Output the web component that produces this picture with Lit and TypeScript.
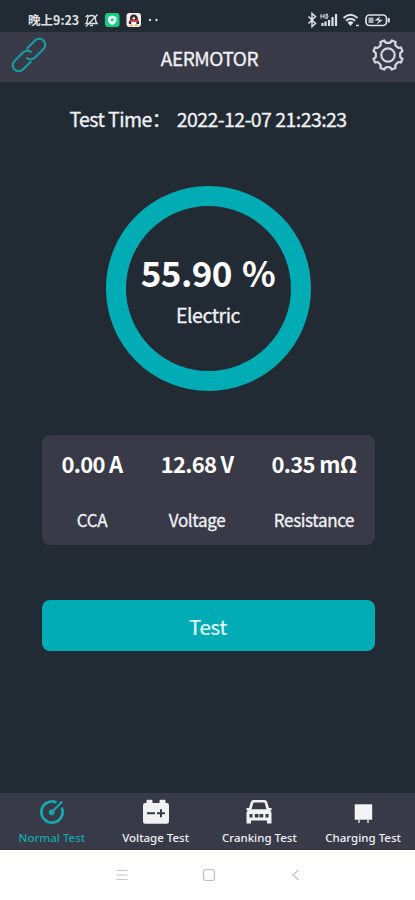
import { LitElement, html, svg, css } from "lit";
import { customElement } from "lit/decorators.js";

const gearPath = (() => {
  const n = 8;
  const pts: string[] = [];
  const at = (r: number, deg: number) => {
    const a = (deg * Math.PI) / 180;
    return `${(17 + r * Math.cos(a)).toFixed(2)} ${(17 + r * Math.sin(a)).toFixed(2)}`;
  };
  for (let i = 0; i < n; i++) {
    const c = (i * 360) / n + 22.5;
    pts.push(`${i ? "L" : "M"}${at(15, c - 8)}`, `L${at(15, c + 8)}`);
    pts.push(`Q${at(11.8, c + 10)} ${at(12.2, c + 22.5)}`, `Q${at(11.8, c + 35)} ${at(15, c + 37)}`);
  }
  return pts.join("") + "Z";
})();

const dial = svg`<g fill="none" stroke="#14a7ad" stroke-width="2.8">
  <path d="M18.5 4.4A10.6 10.6 0 1 0 23.6 9.5"/>
  <path d="M14 14L24.2 3.4" stroke-width="2.2"/></g>
  <circle cx="13.6" cy="14.3" r="2.9" fill="#14a7ad"/>`;
const battery = svg`<path fill="#f1f1f4" d="M4.5 5V3q0-1.2 1.2-1.2h3.6q1.2 0 1.2 1.2v2h7V3q0-1.2 1.2-1.2h3.6q1.2 0 1.2 1.2v2h1.3q2.2 0 2.2 2.2v16.3q0 2.2-2.2 2.2H3.2Q1 25.700 1 23.500V7.200Q1 5 3.200 5z"/>
  <path d="M5 15.300h8M15 15.300h8M19 11.300v8" stroke="#393a47" stroke-width="2"/>`;
const car = svg`<path fill="#f1f1f4" fill-rule="evenodd" d="M8.500 2h11q2 0 2.600 1.800L24 10h2.500v2.500H25q1.500 1 1.500 2.500v10.500h-4.500v-3h-16v3H1.500V15q0-1.500 1.500-2.500H1.500V10H4L5.900 3.800Q6.500 2 8.500 2zM8.500 4.600L6.500 11.300h15L19.500 4.600zM4.500 16v3.500h3v-3.500zM9.800 16v3.500h8.400v-3.500zM20.500 16v3.500h3v-3.500z"/>
  <path d="M14 15.500v4.500" stroke="#f1f1f4" stroke-width="1"/>`;
const plug = svg`<path fill="#f4f4f6" d="M5.700 6.300h17.500v15.400H5.700z"/>
  <path d="M10 21v4M19 21v4" stroke="#d8d9df" stroke-width="1.500"/>`;

const tabs = [
  { label: "Normal Test", icon: dial, on: true },
  { label: "Voltage Test", icon: battery, on: false },
  { label: "Cranking Test", icon: car, on: false },
  { label: "Charging Test", icon: plug, on: false },
];

const readings = [
  { value: "0.00 A", label: "CCA" },
  { value: "12.68 V", label: "Voltage" },
  { value: "0.35 mΩ", label: "Resistance" },
];

@customElement("app-root")
export class AppRoot extends LitElement {
  static styles = css`
    :host {
      display: flex; flex-direction: column; width: 415px; height: 900px; overflow: hidden;
      background: #222b33; color: #f0f1f5; line-height: 1;
      font-family: "Noto Sans CJK SC", "Noto Sans", sans-serif;
    }
    * { box-sizing: border-box; }
    svg { display: block; flex: none; }
    .status { height: 32px; padding: 8px 24px 0 28px; display: flex; justify-content: space-between; align-items: center; color: #dde0e3; }
    .side { display: flex; align-items: center; }
    .clock { font-size: 12.5px; font-weight: 700; white-space: nowrap; width: 52px; }
    .header { height: 50px; background: #393a47; display: flex; align-items: center; justify-content: space-between; padding: 0 10px 4px 10px; }
    .title { font-size: 19px; letter-spacing: -0.45px; white-space: nowrap; margin-top: 5px; -webkit-text-stroke: 0.3px; }
    .main { flex: 1; display: flex; flex-direction: column; align-items: center; padding-left: 1px; }
    .time { display: flex; gap: 6px; margin-top: 26px; height: 22px; align-items: center; font-size: 19.5px; letter-spacing: -0.55px; white-space: nowrap; -webkit-text-stroke: 0.3px; }
    .stamp { letter-spacing: -0.55px; }
    .ring { margin-top: 56px; width: 205px; height: 205px; border: 20px solid #02acb4; border-radius: 50%; display: flex; flex-direction: column; align-items: center; padding-top: 47px; }
    .percent { font-size: 35px; font-weight: 700; line-height: 38px; letter-spacing: -0.6px; word-spacing: 3px; white-space: nowrap; color: #fff; }
    .electric { font-size: 19.5px; letter-spacing: -0.45px; line-height: 24px; margin-top: 12px; -webkit-text-stroke: 0.3px; }
    .card { margin-top: 44px; width: 333px; height: 110px; border-radius: 8px; background: #393a47; padding: 0 18px 0 20px; display: flex; justify-content: space-between; }
    .reading { display: flex; flex-direction: column; align-items: center; white-space: nowrap; }
    .value { font-size: 22px; font-weight: 700; line-height: 26px; letter-spacing: -0.7px; margin-top: 15px; color: #fff; }
    .label { font-size: 17px; line-height: 22px; letter-spacing: -0.35px; margin-top: 33px; -webkit-text-stroke: 0.3px; }
    .button { margin-top: 55px; width: 333px; height: 51px; border: 0; border-radius: 8px; background: #02acb4; color: #e6fbfc; font: 400 20.5px/52px "Noto Sans CJK SC", sans-serif; letter-spacing: -0.3px; padding: 0; -webkit-text-stroke: 0.2px; }
    .tabs { height: 57px; background: #393a47; display: grid; grid-template-columns: repeat(4, 1fr); border-bottom: 1px solid #30313e; }
    .tab { display: flex; flex-direction: column; align-items: center; padding-top: 5px; font: 500 11.5px/14px "Noto Sans", sans-serif; white-space: nowrap; }
    .tab span { margin-top: 5px; }
    .on { color: #14a7ad; }
    .nav { height: 50px; background: #fff; display: flex; justify-content: center; align-items: center; gap: 73px; padding-left: 2px; }
  `;

  render() {
    return html`
      <div class="status">
        <div class="side">
          <span class="clock">晚上9:23</span>
          <svg width="82" height="18" viewBox="0 0 82 18" fill="none">
            <path d="M6 12.500Q7.500 11 7.500 8Q7.500 4.500 11.500 4.500Q15 4.500 15.500 8Q15.500 11 17 12.500ZM10 14.500h3M17.500 3.500L6 15.500M5.500 6L8 4" stroke="#dde0e3" stroke-width="1.300"/>
            <rect x="25" y="2" width="14.500" height="14" rx="3" fill="#14cc86"/>
            <path d="M32.200 4.500L36.500 6v3q0 3-4.300 5Q28 12 28 9V6z" fill="#eafff7"/>
            <circle cx="32.200" cy="8.700" r="1.500" fill="#14cc86"/>
            <rect x="46.500" y="2" width="14.500" height="14" rx="3" fill="#f4eeee"/>
            <path d="M49 13Q48 11 50 9Q49.500 3.500 53.700 3.500T58 9Q60 11 59 13Z" fill="#35272b"/>
            <ellipse cx="53.800" cy="12" rx="2.700" ry="2.500" fill="#fff"/>
            <path d="M50 9.300q4 1.600 8 0" stroke="#df4139" stroke-width="1.800"/>
            <path d="M50 14.300h2.500M55 14.300h2.500" stroke="#ef9c32" stroke-width="1.400"/>
            <circle cx="53.800" cy="7.200" r="1.300" fill="#f4eeee"/>
            <circle cx="70" cy="9" r="1.200" fill="#dde0e3"/><circle cx="76.500" cy="9" r="1.200" fill="#dde0e3"/>
          </svg>
        </div>
        <svg width="84" height="18" viewBox="0 0 84 18" fill="none" stroke="#dde0e3">
          <path d="M1.500 5.500l7 7L5 15.500V2.500l3.500 3L1.500 12.500" stroke-width="1.500"/>
          <path d="M14 3v4.500M17 3v4.500M14 5.200h3M19 3v4.500h1.200q1.500-2.200 0-4.500z" stroke-width="1"/>
          <path d="M15.500 15v-3M18.500 15v-4.500M22 15V9M25.500 15V6M29 15V3" stroke-width="2.200"/>
          <path d="M36.500 7Q43.500.500 50.500 7M39 9.800Q43.500 5.800 48 9.800" stroke-width="2"/>
          <path d="M40.500 11.500Q43.500 9 46.500 11.500L43.500 15z" fill="#dde0e3" stroke="none"/>
          <path d="M49 14.500h3" stroke-width="1.500"/>
          <rect x="59" y="4" width="20.500" height="10.500" rx="3.500" stroke-width="1.700"/>
          <path d="M61.500 6.500h5v5.500h-5z" fill="#a7abae" stroke="none"/>
          <path d="M73 5.500L67.500 9.500h4.500L69.500 13.500L76 8.700h-4z" fill="#dde0e3" stroke="none"/>
          <path d="M81.800 7v4.500" stroke-width="2"/>
        </svg>
      </div>
      <div class="header">
        <svg width="38" height="38" viewBox="-19 -19 38 38" fill="none" stroke="#169ca1" stroke-width="2.200" stroke-linecap="round">
          <g transform="rotate(-45)">
            <path d="M3.500 -6H14.500A6 6 0 0 1 14.500 6H2.500A6 6 0 0 1 -3.500 1"/>
            <path d="M-3.500 6H-14.500A6 6 0 0 1 -14.500 -6H-2.500A6 6 0 0 1 3.500 -1"/>
          </g>
        </svg>
        <span class="title">AERMOTOR</span>
        <svg width="34" height="34" viewBox="0 0 34 34" fill="none" stroke="#d3d4de" stroke-width="2.200" stroke-linejoin="round">
          <path d="${gearPath}"/><circle cx="17" cy="17" r="6.700"/>
        </svg>
      </div>
      <div class="main">
        <div class="time"><span>Test Time：</span><span class="stamp">2022-12-07 21:23:23</span></div>
        <div class="ring"><div class="percent">55.90 %</div><div class="electric">Electric</div></div>
        <div class="card">
          ${readings.map((r) => html`<div class="reading"><div class="value">${r.value}</div><div class="label">${r.label}</div></div>`)}
        </div>
        <button class="button">Test</button>
      </div>
      <div class="tabs">
        ${tabs.map((t) => html`<div class="tab ${t.on ? "on" : ""}">
          <svg width="28" height="28" viewBox="0 0 28 28">${t.icon}</svg><span>${t.label}</span></div>`)}
      </div>
      <div class="nav">
        <svg width="14" height="14" viewBox="0 0 14 14" fill="none" stroke="#c6c6c6" stroke-width="1.100"><path d="M1.500 2.500h11M1.500 7h11M1.500 11.500h11"/></svg>
        <svg width="14" height="14" viewBox="0 0 14 14" fill="none" stroke="#c0c0c0" stroke-width="1.200"><rect x="1.500" y="1.500" width="11" height="11" rx="2.500"/></svg>
        <svg width="14" height="14" viewBox="0 0 14 14" fill="none" stroke="#c0c0c0" stroke-width="1.200"><path d="M9.500 2L4 7l5.500 5"/></svg>
      </div>
    `;
  }
}
